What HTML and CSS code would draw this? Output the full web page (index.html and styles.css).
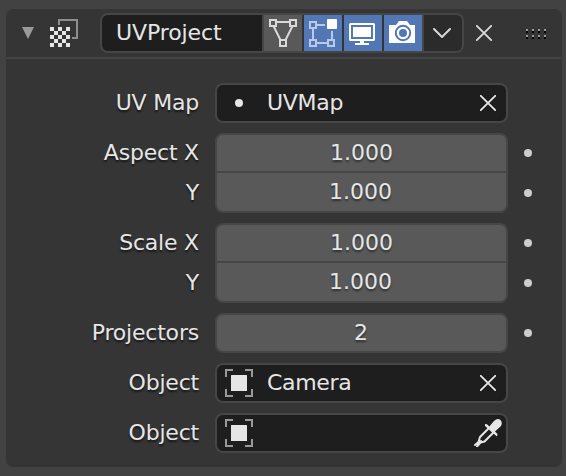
FILE: index.html
```html
<!DOCTYPE html>
<html lang="en">
<head>
<meta charset="utf-8">
<title>UVProject modifier</title>
<link rel="stylesheet" href="styles.css">
</head>
<body>
<svg class="defs" width="0" height="0" aria-hidden="true">
  <symbol id="cross" viewBox="0 0 16 16"><path d="M.8.8 15.2 15.2M15.2.8.8 15.2" fill="none" stroke="currentColor" stroke-width="1.9" stroke-linecap="round"/></symbol>
  <symbol id="object" viewBox="0 0 28 28"><path d="M1 8V1h7M20 1h7v7M27 20v7h-7M8 27H1v-7" fill="none" stroke="#999" stroke-width="2"/><rect x="6" y="6" width="16" height="16" rx=".6" fill="#e6e6e6"/></symbol>
</svg>
<section class="panel">
  <header class="head">
    <svg class="disclosure" width="12" height="12"><path d="M0 0h12L6 12z" fill="#999"/></svg>
    <svg class="type" width="28" height="28">
      <path d="M9 6V1h18v18h-5" fill="none" stroke="#8e8e8e" stroke-width="2"/>
      <path d="M0 8h4v4H0zM8 8h4v4H8zM16 8h4v4h-4zM4 12h4v4H4zM12 12h4v4h-4zM0 16h4v4H0zM8 16h4v4H8zM16 16h4v4h-4zM4 20h4v4H4zM12 20h4v4h-4zM0 24h4v4H0zM8 24h4v4H8zM16 24h4v4h-4z" fill="#e6e6e6" shape-rendering="crispEdges"/>
    </svg>
    <div class="group">
      <div class="name">UVProject</div>
      <div class="btn grey"><svg width="38" height="36" fill="none" stroke="#d9d9d9" stroke-width="2"><path d="M12 7h14M9.500 11l7 14M28.500 11l-7 14"/><path d="M6 5h6v6H6zM26 5h6v6h-6zM16 25h6v6h-6z"/></svg></div>
      <div class="btn blue"><svg width="38" height="36" fill="none" stroke="#bac9e6" stroke-width="2"><path d="M12 10h9M9 13v12M12 28h12M28 16v9"/><path d="M6 7h6v6H6zM6 25h6v6H6zM24 25h6v6h-6z"/><rect x="23" y="4" width="10" height="10" rx=".8" fill="#fff" stroke="none"/></svg></div>
      <div class="btn blue"><svg width="38" height="36"><rect x="6" y="9" width="24" height="16" rx=".6" fill="none" stroke="#fff" stroke-width="2"/><path d="M9 12h18v10H9zM16 26h4v2h5v2H11v-2h5z" fill="#fff"/></svg></div>
      <div class="btn blue last"><svg width="38" height="36"><path d="M5.500 10H12l3-4h8l3 4h4.500q.5 0 .5.500v17q0 .5-.5.500h-25q-.5 0-.5-.5v-17q0-.5.500-.5z" fill="#fff"/><circle cx="19" cy="18" r="7.200" fill="none" stroke="#5177b4" stroke-width="2"/><circle cx="19" cy="18" r="4" fill="#5177b4"/></svg></div>
      <div class="more"><svg width="18" height="10"><path d="M1 1l8 8 8-8" fill="none" stroke="#d9d9d9" stroke-width="2" stroke-linecap="round"/></svg></div>
    </div>
    <svg class="close" width="16" height="16"><use href="#cross"/></svg>
    <svg class="grip" width="21" height="12" shape-rendering="crispEdges">
      <path d="M0 3h20M0 9h20" stroke="#999" stroke-width="2" stroke-dasharray="2 4"/>
      <path d="M0 5h20M0 11h20" stroke="#000" stroke-width="2" stroke-dasharray="2 4"/>
    </svg>
  </header>
  <div class="body">
    <div class="row"><label>UV Map</label><div class="field dark"><span class="icon"><i class="dot bright"></i></span><span class="value">UVMap</span><svg class="clear" width="16" height="16"><use href="#cross"/></svg></div></div>
    <div class="row pair"><div class="labels"><label>Aspect X</label><label>Y</label></div><div class="field double"><span>1.000</span><span>1.000</span></div><div class="dots"><i class="dot"></i><i class="dot"></i></div></div>
    <div class="row pair"><div class="labels"><label>Scale X</label><label>Y</label></div><div class="field double"><span>1.000</span><span>1.000</span></div><div class="dots"><i class="dot"></i><i class="dot"></i></div></div>
    <div class="row"><label>Projectors</label><div class="field number"><span>2</span></div><div class="dots"><i class="dot"></i></div></div>
    <div class="row"><label>Object</label><div class="field dark"><span class="icon"><svg width="28" height="28"><use href="#object"/></svg></span><span class="value">Camera</span><svg class="clear" width="16" height="16"><use href="#cross"/></svg></div></div>
    <div class="row"><label>Object</label><div class="field dark"><span class="icon"><svg width="28" height="28"><use href="#object"/></svg></span><svg class="dropper" width="28" height="28"><path d="M11 5l2 .3 2.300 2.200L20 2q3-3 6-1.500 3 2.500 1 6.500l-6 5.500 2.500 2.500-.5 2.500-3-2.500-1-.5-4-4L11 7z" fill="#e6e6e6"/><path d="M14.500 9.500 6 18l-1.500 5L1 26M19 14l-8.500 8.500-4 1L3 27.500M7 22l-3 3.500" fill="none" stroke="#e6e6e6" stroke-width="2" stroke-linecap="round" stroke-linejoin="round"/></svg></div></div>
  </div>
</section>
</body>
</html>
```
FILE: styles.css
```css
* { box-sizing: border-box; }
body {
  margin: 0;
  height: 476px;
  padding: 9px 4px 9px 6px;
  background: #424242;
  color: #e6e6e6;
  font: 22px/36px "DejaVu Sans", sans-serif;
  overflow: hidden;
}
.defs { display: none; }
svg { display: block; flex: none; }
.panel { height: 458px; background: #353535; border-radius: 7px; }
.head {
  display: flex;
  align-items: center;
  height: 50px;
  padding: 0 15px 0 16px;
  border-bottom: 2px solid #434343;
}
.type { margin-left: 16px; }
.group {
  display: flex;
  width: 364px;
  height: 40px;
  margin-left: 22px;
  border: 2px solid #464646;
  border-radius: 8px;
  overflow: hidden;
}
.name {
  width: 162px;
  padding-left: 14px;
  border-right: 2px solid #464646;
  background: #1e1e1e;
  letter-spacing: -.1px;
}
.btn { width: 40px; border-right: 2px solid #343434; }
.grey { background: #595959; }
.blue { background: #5177b4; }
.last { border-color: #464646; }
.more { display: grid; flex: 1; place-items: center; padding-right: 2px; background: #2b2b2b; }
.close { margin-left: 12px; color: #d9d9d9; }
.grip { margin-left: 34px; }
.body { display: flex; flex-direction: column; gap: 10px; padding-top: 24px; }
.row { display: flex; height: 40px; }
.pair { height: 80px; }
.row > label, .labels { width: 193px; text-align: right; text-shadow: 0 2px 2px #0009; letter-spacing: -.2px; }
.row > label, .labels label { display: block; line-height: 39px; white-space: nowrap; }
.labels label + label { margin-top: 1px; }
.field {
  width: 293px;
  margin-left: 16px;
  border: 2px solid #464646;
  border-radius: 8px;
  background: #595959;
  overflow: hidden;
}
.dark { display: flex; align-items: center; background: #1e1e1e; }
.icon { display: grid; width: 28px; margin-left: 8px; place-items: center; }
.value { margin-left: 14px; letter-spacing: -.3px; }
.clear { margin: 0 10px 0 auto; }
.dropper { margin: 0 4px 0 auto; }
.double span, .number span { display: block; height: 36px; text-align: center; text-shadow: 0 2px 2px #0007; }
.double span + span { height: 40px; border-top: 2px solid #464646; padding-right: 2px; line-height: 38px; }
.number span { padding-right: 1px; }
.dots { display: flex; flex-direction: column; width: 40px; align-items: center; }
.dots .dot { margin: 16px 0; }
.dot { width: 8px; height: 8px; border-radius: 50%; background: #ccc; }
.bright { background: #e6e6e6; }
```
